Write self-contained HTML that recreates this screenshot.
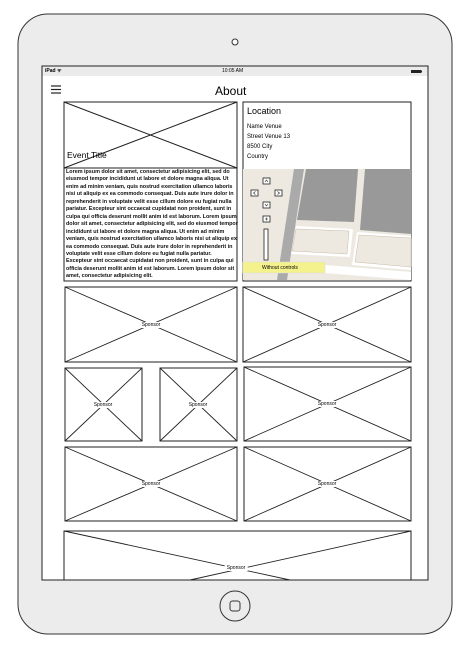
<!DOCTYPE html>
<html><head><meta charset="utf-8"><style>
*{margin:0;padding:0}
body{width:472px;height:648px;background:#fff;position:relative;overflow:hidden;font-family:"Liberation Sans",sans-serif}
.t{position:absolute;color:#000;white-space:nowrap}
.sp{position:absolute;font-size:5px;background:#fff;padding:0 2px;transform:translate(-50%,-50%)}
#para{position:absolute;left:66px;top:169px;width:172px;height:109px;overflow:hidden;font-size:5.45px;line-height:7.45px;font-weight:bold;color:#111;letter-spacing:-0.02px}
</style></head><body>
<svg width="472" height="648" style="position:absolute;left:0;top:0" fill="none" stroke="#222" stroke-width="1">
<rect x="18" y="14" width="434" height="620" rx="30" fill="#ececec" stroke="#333"/>
<circle cx="235" cy="42" r="3" fill="#fff" stroke="#333"/>
<rect x="42" y="66" width="386" height="514" fill="#fff" stroke="#222"/>
<rect x="42.5" y="66.5" width="385" height="9.5" fill="#ebebeb" stroke="none"/>
<rect x="411" y="70" width="10" height="3" fill="#222" stroke="none"/>
<rect x="421" y="70.5" width="1" height="2" fill="#222" stroke="none"/>
<g stroke="#222" stroke-width="1.2"><line x1="51" y1="86" x2="61" y2="86"/><line x1="51" y1="89.5" x2="61" y2="89.5"/><line x1="51" y1="93" x2="61" y2="93"/></g>
<rect x="64" y="102" width="173" height="66" fill="#fff"/>
<line x1="64" y1="102" x2="237" y2="168"/><line x1="237" y1="102" x2="64" y2="168"/>
<rect x="64" y="168" width="173" height="113" stroke="#222"/>
<rect x="243" y="102" width="168" height="179"/>
<g stroke="none">
<rect x="243" y="169" width="168" height="111" fill="#ede9e1"/>
<polygon points="294,169 304,169 287,280 277,280" fill="#aaa"/>
<polygon points="306,169 358,169 354,222 297,220" fill="#999"/>
<polygon points="365,169 411,169 411,234 360,230" fill="#999"/>
<polygon points="296,226 353,229 350,257 291,254" fill="#fff"/>
<polygon points="296,229 349,231 347,254 292,251" fill="#ede9e1" stroke="#c9b9a3" stroke-width="0.5"/>
<polygon points="357,232 411,236 411,270 352,265" fill="#fff"/>
<polygon points="359,235 411,238 411,267 355,262" fill="#ede9e1" stroke="#c9b9a3" stroke-width="0.5"/>
<polygon points="289,262 411,272 411,280 287,270" fill="#fff"/>
</g>
<g fill="#fff" stroke="#222" stroke-width="0.8">
<rect x="263" y="178" width="7" height="6"/><rect x="251" y="190" width="7" height="6"/><rect x="275" y="190" width="7" height="6"/>
<rect x="263" y="202" width="7" height="6"/><rect x="263" y="216" width="7" height="6"/><rect x="264" y="229" width="4" height="31"/>
</g>
<g stroke="#222" stroke-width="0.6">
<path d="M265 182L266.5 180L268 182M255.5 191.5L253.5 193L255.5 194.5M277.5 191.5L279.5 193L277.5 194.5M265 204L266.5 206L268 204M266.5 217.5V220.5M265 219H268"/>
</g>
<rect x="243" y="262" width="82" height="11" fill="#f4f28c" stroke="#ddd" stroke-width="0.5"/>
<g fill="#fff">
<rect x="65" y="287" width="172" height="75"/><rect x="243" y="287" width="168" height="75"/>
<rect x="65" y="368" width="77" height="73"/><rect x="160" y="368" width="77" height="73"/><rect x="244" y="367" width="167" height="74"/>
<rect x="65" y="447" width="172" height="74"/><rect x="244" y="447" width="167" height="74"/>
<path d="M64 580V531H411V580"/>
</g>
<g stroke-width="0.9">
<path d="M65 287L237 362M237 287L65 362M243 287L411 362M411 287L243 362"/>
<path d="M65 368L142 441M142 368L65 441M160 368L237 441M237 368L160 441M244 367L411 441M411 367L244 441"/>
<path d="M65 447L237 521M237 447L65 521M244 447L411 521M411 447L244 521"/>
<path d="M64 531L290 580M411 531L190 580"/>
</g>
<line x1="42" y1="580" x2="428" y2="580" stroke="#222"/>
<circle cx="235" cy="606" r="15" fill="#ececec" stroke="#333"/>
<rect x="230" y="601" width="10" height="10" rx="2.5" stroke="#333"/>
</svg>
<div class="t" style="left:45px;top:68px;font-size:5px;font-weight:bold">iPad ᯤ</div>
<div class="t" style="left:222px;top:68px;font-size:5px">10:05 AM</div>
<div class="t" style="left:215px;top:84px;font-size:12px">About</div>
<div class="t" style="left:67px;top:150px;font-size:8.5px">Event Title</div>
<div id="para">Lorem ipsum dolor sit amet, consectetur adipisicing elit, sed do eiusmod tempor incididunt ut labore et dolore magna aliqua. Ut enim ad minim veniam, quis nostrud exercitation ullamco laboris nisi ut aliquip ex ea commodo consequat. Duis aute irure dolor in reprehenderit in voluptate velit esse cillum dolore eu fugiat nulla pariatur. Excepteur sint occaecat cupidatat non proident, sunt in culpa qui officia deserunt mollit anim id est laborum. Lorem ipsum dolor sit amet, consectetur adipisicing elit, sed do eiusmod tempor incididunt ut labore et dolore magna aliqua. Ut enim ad minim veniam, quis nostrud exercitation ullamco laboris nisi ut aliquip ex ea commodo consequat. Duis aute irure dolor in reprehenderit in voluptate velit esse cillum dolore eu fugiat nulla pariatur. Excepteur sint occaecat cupidatat non proident, sunt in culpa qui officia deserunt mollit anim id est laborum. Lorem ipsum dolor sit amet, consectetur adipisicing elit.</div>
<div class="t" style="left:247px;top:106px;font-size:9px">Location</div>
<div class="t" style="left:247px;top:122px;font-size:6px;line-height:10px">Name Venue<br>Street Venue 13<br>8500 City<br>Country</div>
<div class="t" style="left:262px;top:265px;font-size:5px">Without controls</div>
<div class="sp" style="left:151px;top:325px">Sponsor</div>
<div class="sp" style="left:327px;top:325px">Sponsor</div>
<div class="sp" style="left:103px;top:405px">Sponsor</div>
<div class="sp" style="left:198px;top:405px">Sponsor</div>
<div class="sp" style="left:327px;top:404px">Sponsor</div>
<div class="sp" style="left:151px;top:484px">Sponsor</div>
<div class="sp" style="left:327px;top:484px">Sponsor</div>
<div class="sp" style="left:236px;top:568px">Sponsor</div>
</body></html>
